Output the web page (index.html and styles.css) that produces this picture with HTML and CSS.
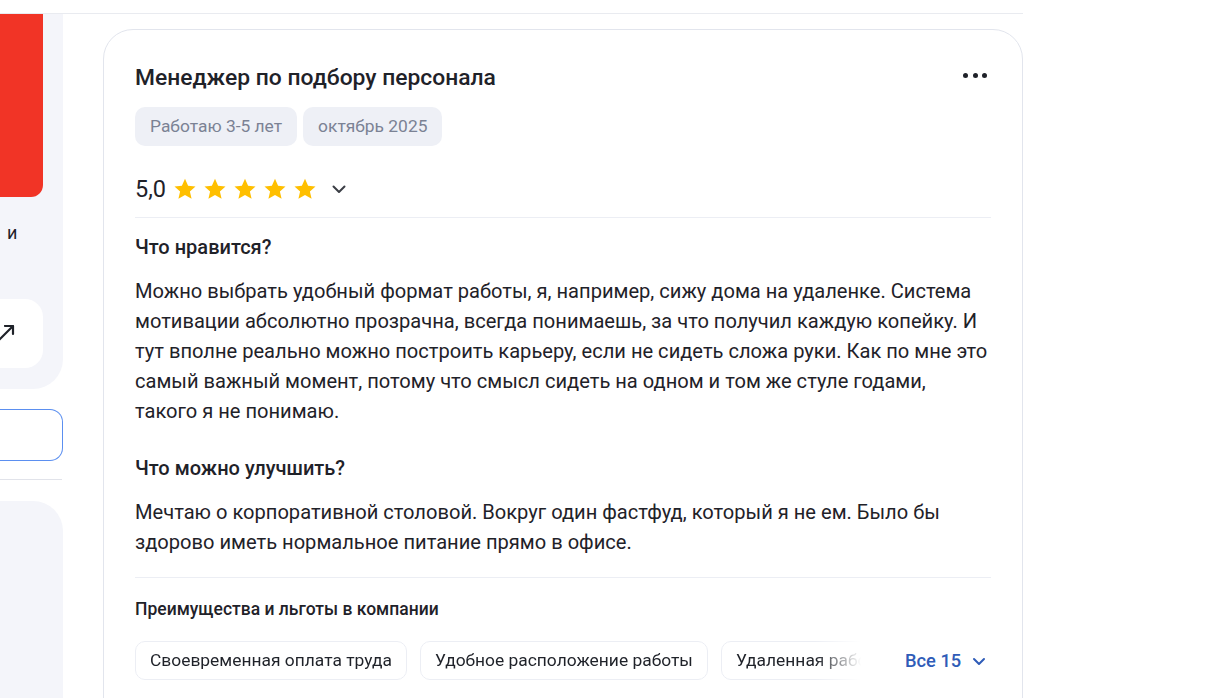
FILE: index.html
```html
<!DOCTYPE html>
<html lang="ru">
<head>
<meta charset="utf-8">
<link rel="stylesheet" href="styles.css">
</head>
<body>
<div class="topbar"></div>
<div class="layout">
  <aside class="side">
    <div class="side-panel">
      <div class="promo"></div>
      <div class="side-text">и</div>
      <div class="side-link">
        <svg class="arrow" width="16" height="16" viewBox="0 0 16 16"><path d="M-1 15 L13 1 M5 1 H13 V9" fill="none" stroke="#1f2229" stroke-width="2.2" stroke-linecap="round" stroke-linejoin="round"/></svg>
      </div>
    </div>
    <div class="side-button"></div>
    <div class="side-sep"></div>
    <div class="side-panel2"></div>
  </aside>
  <main class="main">
    <article class="card">
      <header class="card-head">
        <h2 class="title">Менеджер по подбору персонала</h2>
        <button class="more" aria-label="Ещё"><span></span><span></span><span></span></button>
      </header>
      <div class="tags">
        <span class="tag">Работаю 3-5 лет</span>
        <span class="tag">октябрь 2025</span>
      </div>
      <div class="rating">
        <span class="score">5,0</span>
        <span class="stars">
          <svg class="star" viewBox="0 0 24 24"><path d="M12 1.8l3.1 6.9 7.4.7-5.6 5 1.7 7.4L12 17.9l-6.6 3.9 1.7-7.4-5.6-5 7.4-.7z"/></svg>
          <svg class="star" viewBox="0 0 24 24"><path d="M12 1.8l3.1 6.9 7.4.7-5.6 5 1.7 7.4L12 17.9l-6.6 3.9 1.7-7.4-5.6-5 7.4-.7z"/></svg>
          <svg class="star" viewBox="0 0 24 24"><path d="M12 1.8l3.1 6.9 7.4.7-5.6 5 1.7 7.4L12 17.9l-6.6 3.9 1.7-7.4-5.6-5 7.4-.7z"/></svg>
          <svg class="star" viewBox="0 0 24 24"><path d="M12 1.8l3.1 6.9 7.4.7-5.6 5 1.7 7.4L12 17.9l-6.6 3.9 1.7-7.4-5.6-5 7.4-.7z"/></svg>
          <svg class="star" viewBox="0 0 24 24"><path d="M12 1.8l3.1 6.9 7.4.7-5.6 5 1.7 7.4L12 17.9l-6.6 3.9 1.7-7.4-5.6-5 7.4-.7z"/></svg>
        </span>
        <svg class="chev" width="16" height="16" viewBox="0 0 16 16"><path d="M2.5 5.5 L8 11 L13.5 5.5" fill="none" stroke="#3b3e45" stroke-width="2" stroke-linecap="round" stroke-linejoin="round"/></svg>
      </div>
      <div class="divider"></div>
      <h3 class="q">Что нравится?</h3>
      <p class="text">Можно выбрать удобный формат работы, я, например, сижу дома на удаленке. Система мотивации абсолютно прозрачна, всегда понимаешь, за что получил каждую копейку. И тут вполне реально можно построить карьеру, если не сидеть сложа руки. Как по мне это самый важный момент, потому что смысл сидеть на одном и том же стуле годами, такого я не понимаю.</p>
      <h3 class="q q2">Что можно улучшить?</h3>
      <p class="text">Мечтаю о корпоративной столовой. Вокруг один фастфуд, который я не ем. Было бы здорово иметь нормальное питание прямо в офисе.</p>
      <div class="divider d2"></div>
      <h4 class="perks-title">Преимущества и льготы в компании</h4>
      <div class="perks">
        <div class="chips">
          <span class="chip">Своевременная оплата труда</span>
          <span class="chip">Удобное расположение работы</span>
          <span class="chip">Удаленная работа</span>
        </div>
        <button class="all">Все 15
          <svg width="16" height="16" viewBox="0 0 16 16"><path d="M3 6 L8 11 L13 6" fill="none" stroke="#2f5cb8" stroke-width="2" stroke-linecap="round" stroke-linejoin="round"/></svg>
        </button>
      </div>
      <div class="divider d3"></div>
    </article>
  </main>
</div>
</body>
</html>
```

FILE: styles.css
```css
* { box-sizing: border-box; }
html, body { margin: 0; padding: 0; }
body {
  background: #fff;
  font-family: Roboto, "Liberation Sans", sans-serif;
  color: #1f2229;
  width: 1211px;
  height: 698px;
  overflow: hidden;
}
.topbar {
  width: 1023px;
  height: 14px;
  border-bottom: 1px solid #e9ebf0;
}
.layout {
  display: flex;
  align-items: flex-start;
}
.side {
  width: 63px;
  flex: none;
  display: flex;
  flex-direction: column;
}
.side-panel {
  background: #f4f5fa;
  border-bottom-right-radius: 30px;
  height: 375px;
  padding-right: 20px;
  display: flex;
  flex-direction: column;
}
.promo {
  height: 183px;
  background: #f13426;
  border-bottom-right-radius: 12px;
}
.side-text {
  font-size: 18px;
  line-height: 24px;
  margin-top: 24px;
  padding-left: 7px;
  color: #1f2229;
}
.side-link {
  margin-top: 54px;
  height: 69px;
  background: #fff;
  border-top-right-radius: 18px;
  border-bottom-right-radius: 18px;
  display: flex;
  align-items: center;
  overflow: hidden;
}
.arrow { display: block; margin-top: -2px; }
.side-button {
  margin-top: 20px;
  height: 52px;
  border: 1px solid #5b8ff0;
  border-left: none;
  border-top-right-radius: 13px;
  border-bottom-right-radius: 13px;
}
.side-sep {
  margin-top: 18px;
  height: 1px;
  background: #e1e3ea;
  width: 62px;
}
.side-panel2 {
  margin-top: 21px;
  height: 220px;
  background: #f4f5fa;
  border-top-right-radius: 30px;
}
.main {
  padding-left: 40px;
  padding-top: 15px;
}
.card {
  width: 920px;
  height: 700px;
  border: 1px solid #e2e5ed;
  border-radius: 30px;
  padding: 32px 31px 0 31px;
}
.card-head {
  display: flex;
  align-items: center;
  justify-content: space-between;
  height: 32px;
}
.title {
  margin: 0;
  font-size: 22.85px;
  font-weight: 500;
  line-height: 32px;
  color: #1f2229;
}
.more {
  border: none;
  background: none;
  padding: 0;
  margin-right: 4px;
  margin-top: -6px;
  display: flex;
  gap: 4.5px;
}
.more span {
  width: 5px;
  height: 5px;
  border-radius: 50%;
  background: #1f2229;
}
.tags {
  display: flex;
  gap: 6px;
  margin-top: 13px;
}
.tag {
  background: #eef0f6;
  color: #7b8294;
  font-size: 17.4px;
  line-height: 21px;
  padding: 9px 15px;
  border-radius: 10px;
}
.rating {
  margin-top: 27px;
  height: 32px;
  display: flex;
  align-items: center;
}
.score {
  font-size: 23.5px;
  line-height: 32px;
  color: #1f2229;
  margin-right: 7px;
}
.stars { display: flex; gap: 6px; }
.star { width: 24px; height: 24px; fill: #ffbf00; display: block; }
.chev { margin-left: 14px; display: block; }
.divider {
  height: 1px;
  background: #eceef4;
  margin-top: 12px;
}
.q {
  margin: 17px 0 0;
  font-size: 20px;
  font-weight: 500;
  line-height: 24px;
  color: #1f2229;
}
.q2 { margin-top: 30px; }
.text {
  margin: 17px 0 0;
  font-size: 20.1px;
  line-height: 30px;
  color: #1f2229;
}
.d2 { margin-top: 20px; }
.perks-title {
  margin: 21px 0 0;
  font-size: 17.5px;
  font-weight: 500;
  line-height: 20px;
  color: #1f2229;
}
.perks {
  margin-top: 22px;
  display: flex;
  align-items: center;
}
.chips {
  display: flex;
  gap: 13px;
  width: 726px;
  overflow: hidden;
  -webkit-mask-image: linear-gradient(to right, #000 680px, transparent 726px);
  mask-image: linear-gradient(to right, #000 680px, transparent 726px);
}
.chip {
  flex: none;
  border: 1px solid #eceef4;
  border-radius: 10px;
  font-size: 17.4px;
  line-height: 21px;
  padding: 8px 14px;
  color: #1f2229;
  white-space: nowrap;
}
.all {
  margin-left: 44px;
  border: none;
  background: none;
  padding: 0;
  font-family: inherit;
  font-size: 18.3px;
  font-weight: 500;
  color: #2f5cb8;
  display: flex;
  align-items: center;
  gap: 10px;
}
.all svg { display: block; }
.d3 { margin-top: 18px; }
```
